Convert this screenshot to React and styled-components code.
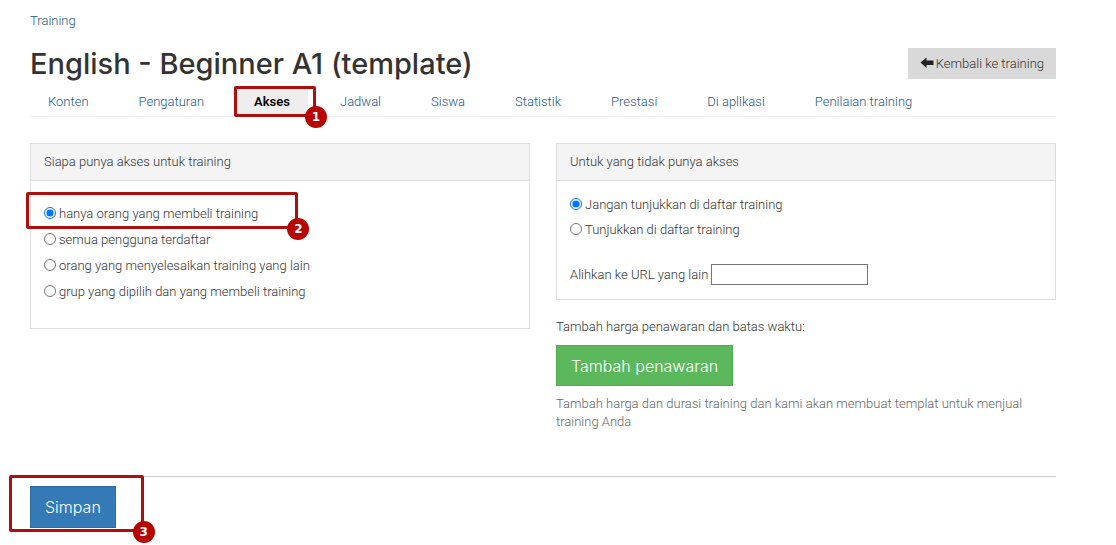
import React, { useState } from "react";
import styled, { createGlobalStyle, css } from "styled-components";

const GlobalStyle = createGlobalStyle`
  *, *::before, *::after { box-sizing: border-box; }
  body {
    margin: 0;
    background: #fff;
    color: #333;
    font-family: Roboto, "Open Sans", sans-serif;
    font-size: 13px;
    font-weight: 300;
    line-height: 18px;
  }
`;

const Page = styled.div`
  padding: 12px 60px 16px 30px;
`;

const link = css`
  color: #23598a;
  text-decoration: none;
`;

const Crumb = styled.a`
  ${link}
  display: inline-block;
`;

const TitleRow = styled.header`
  display: flex;
  justify-content: space-between;
  align-items: center;
  margin-top: 15px;
`;

const Title = styled.h1`
  margin: 0;
  padding-top: 2px;
  font-family: Inter, sans-serif;
  font-size: 29px;
  line-height: 34px;
  font-weight: 500;
`;

const BackButton = styled.a`
  display: flex;
  align-items: center;
  gap: 2px;
  padding: 6px 12px;
  line-height: 19px;
  background: #d9d9d9;
  color: #333;
  text-decoration: none;
`;

const Tabs = styled.nav`
  display: flex;
  gap: 14px;
  margin-top: 7px;
  border-bottom: 1px solid #eee;
`;

const Tab = styled.a`
  ${link}
  position: relative;
  padding: 5px 18px;
  ${(p) =>
    p["aria-current"] &&
    css`
      background: #eee;
      color: #000;
      font-weight: 600;
    `}
`;

const Ring = styled.span`
  position: absolute;
  inset: ${(p) => p.$inset};
  border: 3px solid #ad0f0c;
  border-radius: 2px;
  pointer-events: none;
`;

const Badge = styled.span`
  position: absolute;
  right: -14px;
  bottom: -14px;
  width: 22px;
  height: 22px;
  border-radius: 50%;
  background: #b80500;
  color: #fff;
  font: bold 12px/22px "DejaVu Sans", sans-serif;
  text-align: center;
`;

const Columns = styled.main`
  display: grid;
  grid-template-columns: 1fr 1fr;
  align-items: start;
  gap: 26px;
  margin-top: 26px;
`;

const Panel = styled.fieldset`
  min-width: 0;
  margin: 0;
  padding: 0;
  border: 1px solid #ddd;
`;

const PanelHead = styled.legend`
  float: left;
  width: 100%;
  padding: 9px 13px;
  background: #f4f4f4;
  border-bottom: 1px solid #ddd;
`;

const PanelBody = styled.div`
  clear: both;
  padding: ${(p) => (p.$roomy ? "24px 13px 19px" : "15px 13px 14px")};
`;

const Option = styled.label`
  position: relative;
  display: flex;
  width: fit-content;
  gap: 3px;
  padding: 0 0 ${(p) => (p.$roomy ? "8px" : "7px")};
`;

const Radio = styled.input`
  width: 12px;
  height: 12px;
  margin: 2px 0 0;
`;

const UrlField = styled.label`
  display: flex;
  align-items: center;
  gap: 3px;
  margin-top: 18px;
`;

const UrlInput = styled.input`
  width: 157px;
  height: 21px;
  padding: 1px 2px;
  border: 1px solid #767676;
  font: inherit;
`;

const Text = styled.p`
  margin: ${(p) => (p.$muted ? "9px 0 0" : "18px 0 9px")};
  color: ${(p) => (p.$muted ? "#666" : "#333")};
`;

const Button = styled.button`
  padding: 0 14px;
  height: ${(p) => (p.$primary ? "42px" : "41px")};
  border: 1px solid ${(p) => (p.$primary ? "#2e6da4" : "#4cae4c")};
  background: ${(p) => (p.$primary ? "#337ab7" : "#5cb85c")};
  color: #fff;
  font: inherit;
  font-family: Inter, sans-serif;
  font-size: 16px;
`;

const Footer = styled.footer`
  margin-top: 45px;
  padding-top: 9px;
  border-top: 1px solid #ccc;
`;

const Marked = styled.div`
  position: relative;
  width: fit-content;
`;

function ArrowLeft() {
  return (
    <svg width="14" height="12" viewBox="0 0 14 12" aria-hidden="true">
      <path d="M0.5 5.5 L6.5 0.5 V3.5 H13.5 V8 H6.5 V11 Z" fill="#222" />
    </svg>
  );
}

function Callout({ inset, children }) {
  return (
    <Ring $inset={inset}>
      <Badge>{children}</Badge>
    </Ring>
  );
}

const tabs = ["Konten", "Pengaturan", "Akses", "Jadwal", "Siswa", "Statistik", "Prestasi", "Di aplikasi", "Penilaian training"];
const accessOptions = [
  "hanya orang yang membeli training",
  "semua pengguna terdaftar",
  "orang yang menyelesaikan training yang lain",
  "grup yang dipilih dan yang membeli training",
];
const hiddenOptions = ["Jangan tunjukkan di daftar training", "Tunjukkan di daftar training"];

function Options({ name, items, callout, roomy }) {
  const [selected, setSelected] = useState(0);
  return items.map((text, i) => (
    <Option key={text} $roomy={roomy}>
      <Radio type="radio" name={name} checked={selected === i} onChange={() => setSelected(i)} />
      {text}
      {callout && i === 0 && <Callout inset="-13px -40px 2px -18px">{callout}</Callout>}
    </Option>
  ));
}

export default function App() {
  return (
    <>
      <GlobalStyle />
      <Page>
        <Crumb href="#">Training</Crumb>
        <TitleRow>
          <Title>English - Beginner A1 (template)</Title>
          <BackButton href="#">
            <ArrowLeft />
            Kembali ke training
          </BackButton>
        </TitleRow>
        <Tabs>
          {tabs.map((name) => (
            <Tab key={name} href="#" aria-current={name === "Akses" ? "page" : undefined}>
              {name}
              {name === "Akses" && <Callout inset="-2px -8px -1px -2px">1</Callout>}
            </Tab>
          ))}
        </Tabs>
        <Columns>
          <Panel>
            <PanelHead>Siapa punya akses untuk training</PanelHead>
            <PanelBody $roomy>
              <Options name="access" items={accessOptions} callout="2" roomy />
            </PanelBody>
          </Panel>
          <section>
            <Panel>
              <PanelHead>Untuk yang tidak punya akses</PanelHead>
              <PanelBody>
                <Options name="hidden" items={hiddenOptions} />
                <UrlField>
                  Alihkan ke URL yang lain
                  <UrlInput type="text" />
                </UrlField>
              </PanelBody>
            </Panel>
            <Text>Tambah harga penawaran dan batas waktu:</Text>
            <Button type="button">Tambah penawaran</Button>
            <Text $muted>
              Tambah harga dan durasi training dan kami akan membuat templat untuk menjual training Anda
            </Text>
          </section>
        </Columns>
        <Footer>
          <Marked>
            <Button type="submit" $primary>Simpan</Button>
            <Callout inset="-11px -28px -4px -21px">3</Callout>
          </Marked>
        </Footer>
      </Page>
    </>
  );
}
